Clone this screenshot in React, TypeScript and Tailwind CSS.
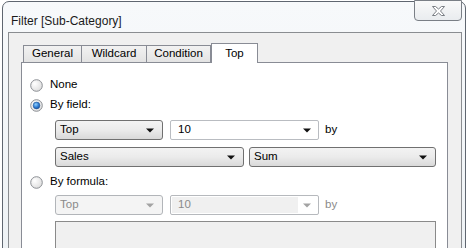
import React from "react";

const FONT = { fontFamily: '"Segoe UI", "Liberation Sans", Arial, sans-serif' };

function Radio({ checked }: { checked?: boolean }) {
  return (
    <svg width="13" height="13" viewBox="0 0 13 13" className="shrink-0">
      <defs>
        <radialGradient id="rg" cx="0.35" cy="0.35" r="0.8">
          <stop offset="0" stopColor="#ffffff" />
          <stop offset="1" stopColor="#d9d9d9" />
        </radialGradient>
        <radialGradient id="rb" cx="0.4" cy="0.35" r="0.7">
          <stop offset="0" stopColor="#8fd0ff" />
          <stop offset="0.6" stopColor="#2d7ad0" />
          <stop offset="1" stopColor="#1a4f9a" />
        </radialGradient>
      </defs>
      <circle cx="6.5" cy="6.5" r="5.8" fill="url(#rg)" stroke="#8c8f94" strokeWidth="1" />
      {checked && <circle cx="6.5" cy="6.5" r="3.4" fill="url(#rb)" stroke="#1d4f8f" strokeWidth="0.5" />}
    </svg>
  );
}

function Arrow({ disabled }: { disabled?: boolean }) {
  return (
    <svg width="8" height="5" viewBox="0 0 8 5" className="shrink-0">
      <path d="M0 0.5 L8 0.5 L4 4.5 Z" fill={disabled ? "#a3a3a3" : "#111"} />
    </svg>
  );
}

function ButtonSelect({ w, label, disabled }: { w: string; label: string; disabled?: boolean }) {
  return (
    <div
      className={`${w} h-[20px] rounded-[3px] border flex items-center pl-[4px] pr-[8px] ${
        disabled
          ? "border-[#b2b5b9] bg-[#f4f4f4] text-[#8a8a8a]"
          : "border-[#707070] bg-gradient-to-b from-[#f3f3f3] via-[#ebebeb] to-[#d9d9d9] text-black"
      }`}
    >
      <span className="flex-1 leading-none">{label}</span>
      <Arrow disabled={disabled} />
    </div>
  );
}

function EditSelect({ w, label, disabled }: { w: string; label: string; disabled?: boolean }) {
  return (
    <div
      className={`${w} h-[20px] rounded-[2px] border flex items-center pr-[3px] ${
        disabled ? "border-[#b6b9bd] bg-white text-[#8a8a8a]" : "border-[#b9bcc1] bg-white text-black"
      }`}
    >
      <div className={`flex-1 self-stretch flex items-center pl-[6px] m-[1px] ${disabled ? "bg-[#f0f0f0]" : ""}`}>
        <span className="leading-none">{label}</span>
      </div>
      <div className="w-[16px] flex items-center justify-center">
        <Arrow disabled={disabled} />
      </div>
    </div>
  );
}

function Tab({ w, label, active }: { w: string; label: string; active?: boolean }) {
  return (
    <div
      className={
        active
          ? `${w} h-[20px] -mb-px relative z-10 bg-white border border-b-0 border-[#898c95] flex items-center justify-center pt-[1px]`
          : `${w} h-[17px] bg-gradient-to-b from-[#f2f2f2] to-[#e3e3e3] border border-b-0 border-[#898c95] flex items-center justify-center`
      }
    >
      <span className="leading-none">{label}</span>
    </div>
  );
}

export default function App() {
  return (
    <div className="w-[470px] h-[248px] bg-white overflow-hidden text-[11.5px] text-black" style={FONT}>
      <div className="relative ml-[2px] mt-[1px] w-[464px] h-[260px] border border-[#5f6670] rounded-t-[7px] bg-gradient-to-b from-[#f7f9fb] to-[#eef2f5] pl-[5px] pr-[3px] flex flex-col">
        {/* close button */}
        <div className="absolute top-[-2px] right-[3px] w-[48px] h-[21px] rounded-b-[4px] border border-[#7a7f86] bg-gradient-to-b from-[#f9f9f9] to-[#e9ecef] flex items-center justify-center">
          <svg width="13" height="10" viewBox="0 0 13 10">
            <path
              d="M0.5 0.5 H3.5 L6.5 3 L9.5 0.5 H12.5 L8.5 5 L12.5 9.5 H9.5 L6.5 7 L3.5 9.5 H0.5 L4.5 5 Z"
              fill="#ffffff"
              stroke="#6c7077"
              strokeWidth="0.9"
              strokeLinejoin="round"
            />
          </svg>
        </div>
        {/* title */}
        <div className="h-[30px] shrink-0 pl-[3px] pt-[10px] text-[12px]">
          <span className="leading-none text-[#1a1a1a]">Filter [Sub-Category]</span>
        </div>
        {/* body panel */}
        <div className="flex-1 bg-[#f0f0f0] border-t border-l border-r border-[#8a8d91] pl-[12px] pr-[13px] pt-[10px] flex flex-col">
          <div className="flex items-end pl-[2px] h-[19px]">
            <Tab w="w-[59px]" label="General" />
            <Tab w="w-[66px] -ml-px" label="Wildcard" />
            <Tab w="w-[65px] -ml-px" label="Condition" />
            <Tab w="w-[47px]" label="Top" active />
          </div>
          <div className="flex-1 bg-white border border-[#898c95] pl-[8px] pt-[14px] flex flex-col">
            <div className="h-[16px] flex items-center gap-[7px]">
              <Radio />
              <span className="leading-none">None</span>
            </div>
            <div className="mt-[4px] h-[16px] flex items-center gap-[7px]">
              <Radio checked />
              <span className="leading-none">By field:</span>
            </div>
            <div className="pl-[25px] flex flex-col">
              <div className="mt-[7px] flex items-center">
                <ButtonSelect w="w-[108px]" label="Top" />
                <div className="ml-[7px]">
                  <EditSelect w="w-[149px]" label="10" />
                </div>
                <span className="ml-[6px] leading-none">by</span>
              </div>
              <div className="mt-[7px] flex items-center gap-[5px]">
                <ButtonSelect w="w-[189px]" label="Sales" />
                <ButtonSelect w="w-[187px]" label="Sum" />
              </div>
            </div>
            <div className="mt-[7px] h-[16px] flex items-center gap-[7px]">
              <Radio />
              <span className="leading-none">By formula:</span>
            </div>
            <div className="pl-[25px] flex flex-col">
              <div className="mt-[5px] flex items-center">
                <ButtonSelect w="w-[108px]" label="Top" disabled />
                <div className="ml-[7px]">
                  <EditSelect w="w-[149px]" label="10" disabled />
                </div>
                <span className="ml-[6px] leading-none text-[#8a8a8a]">by</span>
              </div>
              <div className="mt-[6px] w-[381px] h-[40px] border border-[#8a8a8a] bg-[#f0f0f0]" />
            </div>
          </div>
        </div>
      </div>
    </div>
  );
}
